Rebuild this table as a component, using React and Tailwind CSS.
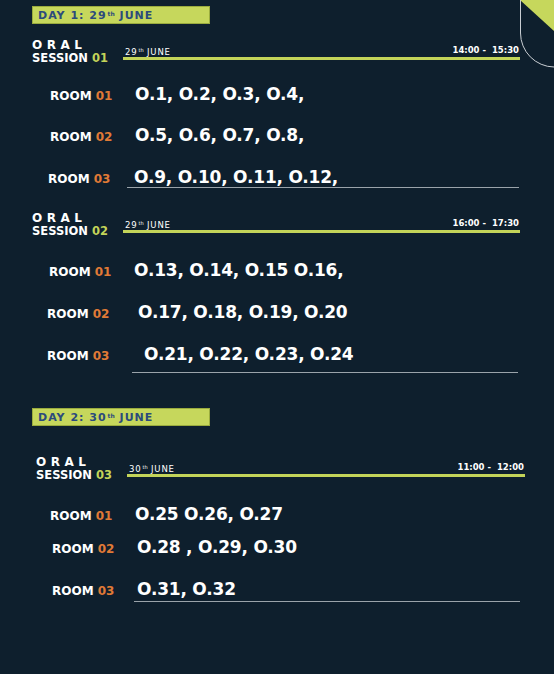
import React from "react";

const F = { fontFamily: '"DejaVu Sans", "Liberation Sans", sans-serif' };

function Banner({ day, date, mt }) {
  return (
    <div className={`${mt} ml-[32px] w-[178px] h-[18px] bg-[#c6d75c] border border-[#9aab3e] flex items-center pl-[5px]`}>
      <span className="text-[#2c4a7c] font-bold text-[11px] tracking-[1px] leading-none">
        DAY {day}: {date}
        <span className="text-[6px] tracking-[0px] align-[3px] ml-[1px]">th</span> JUNE
      </span>
    </div>
  );
}

function SessionHeader({ n, date, time, mt, left, lineStart, lineEnd }) {
  return (
    <div className={`${mt} flex items-start`}>
      <div className={`${left} ${lineStart} shrink-0`}>
        <div className="text-white font-bold text-[12px] leading-[12px] tracking-[4.5px]">ORAL</div>
        <div className="text-white font-bold text-[11.5px] leading-[14px]">
          SESSION <span className="text-[#c3d459]">{n}</span>
        </div>
      </div>
      <div className={`${lineEnd} h-[21px] flex flex-col justify-end`}>
        <div className="flex items-end justify-between h-[12px] pl-[2px] pr-[1px]">
          <span className="text-white text-[8.5px] leading-none tracking-[0.8px] mb-[-1px]">
            {date}
            <span className="text-[5px] align-[3px] tracking-[0px] ml-[1px]">th</span> JUNE
          </span>
          <span className="text-white font-bold text-[8.5px] leading-none whitespace-pre mb-[1px]">{time}</span>
        </div>
        <div className="mt-[2px] h-[3px] bg-[#c3d459]"></div>
      </div>
    </div>
  );
}

function Row({ mt, labelBox, num, codes, codeClass = "" }) {
  return (
    <div className={`${mt} flex items-baseline`}>
      <div className={`${labelBox} shrink-0 text-white font-bold text-[12px] leading-none`}>
        ROOM <span className="text-[#e07a36]">{num}</span>
      </div>
      <div className={`text-white font-bold text-[17px] leading-[20px] tracking-[-0.2px] ${codeClass}`}>{codes}</div>
    </div>
  );
}

export default function App() {
  return (
    <div style={F} className="relative w-[554px] h-[674px] bg-[#0e1f2d] overflow-hidden">
      <svg className="absolute top-0 right-0" width="54" height="80" viewBox="0 0 54 80">
        <polygon points="20,0 54,0 54,31" fill="#c6d75c" />
        <path d="M20.5 0 V33 A34 34 0 0 0 54 67" fill="none" stroke="#c9ced3" strokeWidth="1" />
      </svg>

      <Banner day="1" date="29" mt="mt-[6px]" />

      <SessionHeader n="01" date="29" time="14:00 -  15:30" mt="mt-[15px]" left="pl-[32px]" lineStart="w-[123px]" lineEnd="w-[397px]" />
      <Row mt="mt-[19px]" labelBox="w-[135px] pl-[50px]" num="01" codes="O.1, O.2, O.3, O.4," />
      <Row mt="mt-[21px]" labelBox="w-[135px] pl-[50px]" num="02" codes="O.5, O.6, O.7, O.8," />
      <Row mt="mt-[22px]" labelBox="w-[127px] pl-[48px]" num="03" codes="O.9, O.10, O.11, O.12," codeClass="w-[392px] pl-[7px] border-b border-[#9aa3aa]" />

      <SessionHeader n="02" date="29" time="16:00 -  17:30" mt="mt-[24px]" left="pl-[32px]" lineStart="w-[123px]" lineEnd="w-[397px]" />
      <Row mt="mt-[22px]" labelBox="w-[134px] pl-[49px]" num="01" codes="O.13, O.14, O.15 O.16," />
      <Row mt="mt-[22px]" labelBox="w-[138px] pl-[47px]" num="02" codes="O.17, O.18, O.19, O.20" />
      <Row mt="mt-[22px]" labelBox="w-[132px] pl-[47px]" num="03" codes="O.21, O.22, O.23, O.24" codeClass="w-[386px] pl-[12px] pb-[8px] border-b border-[#9aa3aa]" />

      <Banner day="2" date="30" mt="mt-[35px]" />

      <SessionHeader n="03" date="30" time="11:00 -  12:00" mt="mt-[30px]" left="pl-[36px]" lineStart="w-[127px]" lineEnd="w-[398px]" />
      <Row mt="mt-[22px]" labelBox="w-[135px] pl-[50px]" num="01" codes="O.25 O.26, O.27" />
      <Row mt="mt-[13px]" labelBox="w-[137px] pl-[52px]" num="02" codes="O.28 , O.29, O.30" />
      <Row mt="mt-[22px]" labelBox="w-[134px] pl-[52px]" num="03" codes="O.31, O.32" codeClass="w-[386px] pl-[3px] pb-[2px] border-b border-[#9aa3aa]" />
    </div>
  );
}
